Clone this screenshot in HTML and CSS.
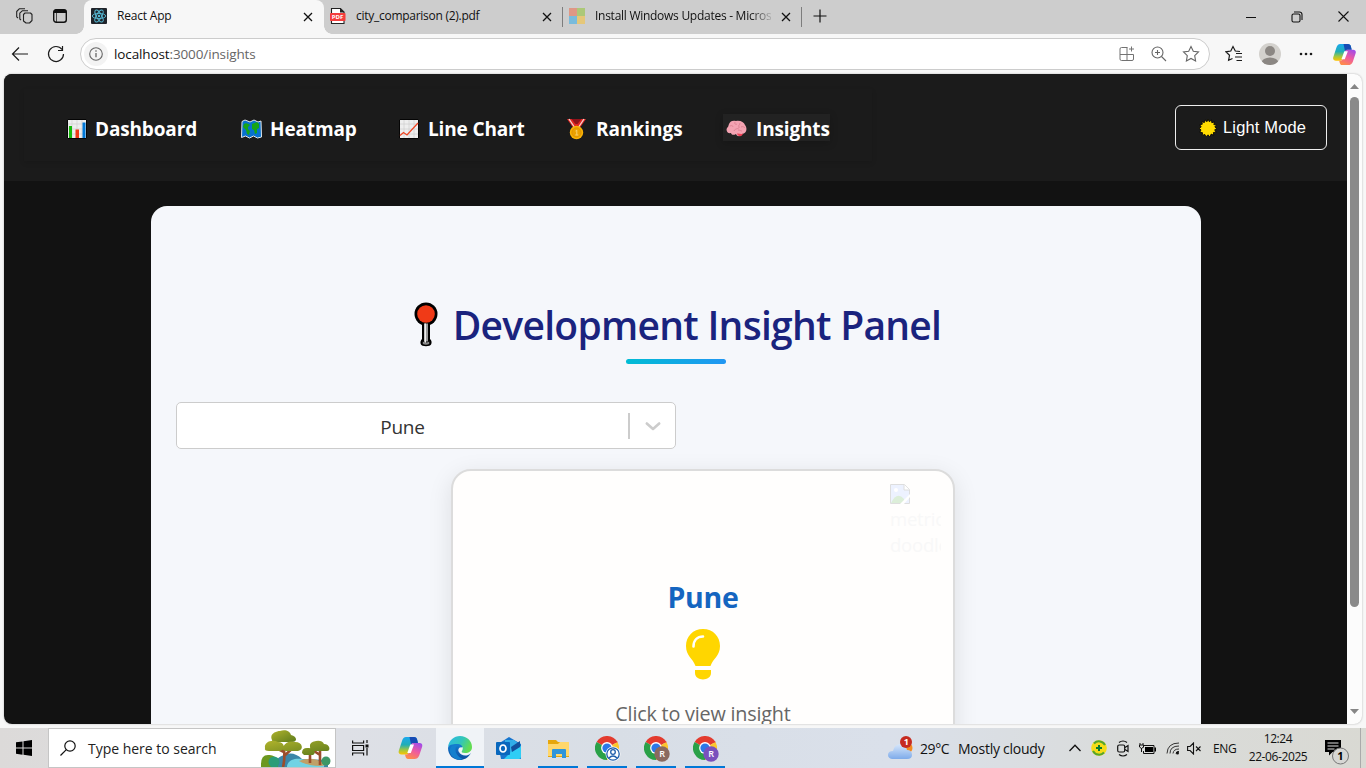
FILE: index.html
```html
<!DOCTYPE html>
<html lang="en">
<head>
<meta charset="utf-8">
<title>React App</title>
<link rel="stylesheet" href="styles.css">
</head>
<body>
<svg class="defs" width="0" height="0">
  <defs>
    <linearGradient id="cpA" x1="0" y1="0" x2="0" y2="1"><stop offset="0" stop-color="#1ba8ee"/><stop offset=".45" stop-color="#20aeb5"/><stop offset=".75" stop-color="#a4c73d"/><stop offset="1" stop-color="#ffc400"/></linearGradient>
    <linearGradient id="cpB" x1=".8" y1="0" x2=".3" y2="1"><stop offset="0" stop-color="#a14bea"/><stop offset=".5" stop-color="#ee5aa0"/><stop offset="1" stop-color="#ff8b4a"/></linearGradient>
    <linearGradient id="edgeA" x1="0" y1="0" x2="1" y2=".4"><stop offset="0" stop-color="#2bb8e8"/><stop offset=".6" stop-color="#33c6b8"/><stop offset="1" stop-color="#62dc52"/></linearGradient>
    <linearGradient id="edgeB" x1="0" y1="0" x2="0" y2="1"><stop offset="0" stop-color="#1683d8"/><stop offset="1" stop-color="#0c4b9c"/></linearGradient>
    <linearGradient id="cloudG" x1="0" y1="0" x2="0" y2="1"><stop offset="0" stop-color="#d7e7fb"/><stop offset="1" stop-color="#7eabea"/></linearGradient>
    <linearGradient id="treeG" x1="0" y1="0" x2="1" y2="1"><stop offset="0" stop-color="#b0b32c"/><stop offset="1" stop-color="#5d7b1c"/></linearGradient>
    <symbol id="close" viewBox="0 0 10 10"><path d="M1 1l8 8M9 1l-8 8" stroke="#111" stroke-width="1.3" fill="none"/></symbol>
    <symbol id="copilot" viewBox="0 0 24 24">
      <path d="M7.500 1h8c2 0 2.700 1 3.100 2.400L19.500 7H15c-1.500 0-2 .8-2.500 2.500l-2 6.500C9.800 18 9 18.500 7.500 18.500H3C1 18.500-.3 17 .2 15L3.500 5C4.300 2.300 5.500 1 7.500 1z" fill="url(#cpA)"/>
      <path d="M11 1h4.500c2 0 2.700 1 3.100 2.400L19.500 7H15c-1.300 0-2 .6-2.400 1.800z" fill="#174bb4"/>
      <path d="M16 23H9.500C8 23 7.500 22 7 20.500l-.5-2h1C9 18.500 9.900 18 10.500 16l2-6.500C13 7.800 13.500 7 15 7h6c2.300 0 3.200 1.500 2.700 3.500l-3 9c-.8 2.500-2.700 3.500-4.700 3.500z" fill="url(#cpB)"/>
      <path d="M11.800 8.500h3.700l-3.200 8.500H8.800z" fill="#fff"/>
    </symbol>
    <symbol id="chrome" viewBox="0 0 24 24">
      <path d="M12 12L1.600 6A12 12 0 0 1 22.400 6z" fill="#e33b2e"/>
      <path d="M12 12L22.400 6A12 12 0 0 1 12 24z" fill="#fcc62d"/>
      <path d="M12 12V24A12 12 0 0 1 1.600 6z" fill="#2aa148"/>
      <path d="M12 6h10.400" stroke="#e33b2e" stroke-width="1"/>
      <circle cx="12" cy="12" r="5.900" fill="#fff"/><circle cx="12" cy="12" r="4.600" fill="#2b78e8"/>
    </symbol>
  </defs>
</svg>

<header class="tabbar">
  <svg class="ws" width="18" height="18" viewBox="0 0 18 18" fill="none" stroke="#222" stroke-width="1.100" stroke-linejoin="round"><path d="M8.500 7.500L10 6h5.500l1.500 1.500v6L14.500 16H11l-2.500-2zM6 13l-1.200-1V6.200L7.500 3.700H13M3 11L1.700 9.800V4.500L4.500 1.700H10"/></svg>
  <svg class="vt" width="16" height="16" viewBox="0 0 16 16"><rect x="1.700" y="1.700" width="12.600" height="12.600" rx="2.500" fill="none" stroke="#111" stroke-width="1.400"/><path d="M1.500 5V3.500a2 2 0 0 1 2-2h9a2 2 0 0 1 2 2V5z" fill="#111"/><path d="M4.500 5v9" stroke="#111" stroke-width=".7"/></svg>
  <div class="tab active">
    <svg class="fav" width="16" height="16" viewBox="0 0 16 16"><rect width="16" height="16" rx="1" fill="#20242b"/><g fill="none" stroke="#58bcd7" stroke-width=".9"><ellipse cx="8" cy="8" rx="6.700" ry="2.600"/><ellipse cx="8" cy="8" rx="6.700" ry="2.600" transform="rotate(60 8 8)"/><ellipse cx="8" cy="8" rx="6.700" ry="2.600" transform="rotate(120 8 8)"/></g><circle cx="8" cy="8" r="1.200" fill="#58bcd7"/></svg>
    <span class="title t-react">React App</span><svg class="x" width="10" height="10"><use href="#close"/></svg>
  </div>
  <div class="tab">
    <svg class="fav pdf" width="16" height="18" viewBox="0 0 16 18"><path d="M1.500 1.500h9l3.500 3.500V16.500H1.500z" fill="#fff" stroke="#222" stroke-width="1.100"/><path d="M10 1v4.500h4.500z" fill="#222"/><rect x="0" y="6" width="15.500" height="8" rx=".8" fill="#f43d3d"/><text x="1.800" y="12.200" class="pdftext">PDF</text></svg>
    <span class="title t-city">city_comparison (2).pdf</span><svg class="x" width="10" height="10"><use href="#close"/></svg>
  </div>
  <div class="tab">
    <svg class="fav" width="16" height="16"><path fill="#df9785" d="M0 0h8v8H0z"/><path fill="#acc878" d="M8 0h8v8H8z"/><path fill="#79bbdc" d="M0 8h8v8H0z"/><path fill="#e5c779" d="M8 8h8v8H8z"/></svg>
    <span class="title fade">Install Windows Updates - Micros</span><svg class="x" width="10" height="10"><use href="#close"/></svg>
  </div>
  <svg class="plus" width="14" height="14"><path d="M7 0.500v13M0.500 7h13" stroke="#111" stroke-width="1.200"/></svg>
  <div class="winctl">
    <svg width="10" height="12"><path d="M0 6.500h10" stroke="#111"/></svg>
    <svg width="12" height="12" fill="none" stroke="#111" stroke-width="1.100"><rect x="1" y="3" width="8" height="8" rx="1.500"/><path d="M3 1h5.500a2.500 2.500 0 0 1 2.500 2.500V9"/></svg>
    <svg width="11" height="11"><path d="M.5.5l10 10M10.500.5l-10 10" stroke="#111" stroke-width="1.100"/></svg>
  </div>
</header>

<div class="toolbar">
  <svg class="back" width="18" height="16" fill="none" stroke="#1b1b1b" stroke-width="1.200"><path d="M17 8H1.500M8 1.500L1.500 8 8 14.500"/></svg>
  <svg class="reload" width="18" height="18" fill="none" stroke="#1b1b1b" stroke-width="1.200"><path d="M15 4.500A7.500 7.500 0 1 0 16.500 9M15.500 1v4.500H11"/></svg>
  <div class="address">
    <span class="info"><svg width="14" height="14"><circle cx="7" cy="7" r="6.300" fill="none" stroke="#666" stroke-width="1.100"/><path d="M7 6v4.300M7 3.300v1.500" stroke="#666" stroke-width="1.300"/></svg></span>
    <span class="url">localhost<span>:3000/insights</span></span>
    <svg class="a1" width="16" height="16" fill="none" stroke="#727272"><path d="M8.500 1.500H2.500a1.500 1.500 0 0 0-1.500 1.500V13a1.500 1.500 0 0 0 1.500 1.500H13a1.500 1.500 0 0 0 1.500-1.500V8.500H1M8 1.500v13M12.500 .5v5M10 3h5"/></svg>
    <svg class="a2" width="16" height="16" fill="none" stroke="#666" stroke-width="1.100"><circle cx="6.500" cy="6.500" r="5.500"/><path d="M10.500 10.500l4.500 4.500M6.500 4v5M4 6.500h5"/></svg>
    <svg class="a3" width="18" height="18" fill="none" stroke="#666" stroke-width="1.100"><path d="M9 1.500l2.300 4.800 5.200.7-3.800 3.700.9 5.300L9 13.500 4.400 16l.9-5.300L1.500 7l5.200-.7z"/></svg>
  </div>
  <svg class="fvs" width="18" height="18" fill="none" stroke="#1b1b1b" stroke-width="1.200"><path d="M15 6.500L10.300 6 8 1.500 5.800 6l-5 .8 3.700 3.500-.9 5L7.500 13.500M11 8.500h6M10 12h7M11.500 15.500H17"/></svg>
  <svg class="avatar" width="22" height="22"><defs><clipPath id="av"><circle cx="11" cy="11" r="11"/></clipPath></defs><circle cx="11" cy="11" r="11" fill="#d3d1cd"/><g fill="#8b8783" clip-path="url(#av)"><circle cx="11" cy="8" r="5"/><ellipse cx="11" cy="20" rx="8.500" ry="5.500"/></g></svg>
  <svg class="dots" width="14" height="4" fill="#1b1b1b"><circle cx="2" cy="2" r="1.300"/><circle cx="7" cy="2" r="1.300"/><circle cx="12" cy="2" r="1.300"/></svg>
  <svg class="cp" width="23" height="23"><use href="#copilot"/></svg>
</div>

<div class="window">
  <main class="page">
    <nav class="nav">
      <div class="links">
        <a class="link dash"><svg width="20" height="20"><path fill="#eee" stroke="#050505" d="M.5.5h19v19H.5z"/><path d="M1 5h18M1 10h18M1 15h18M5 1v18M10 1v18M15 1v18" stroke="#d0d0d0" stroke-width=".7"/><path fill="#16b90b" d="M2 7h3v12H2z"/><path fill="#f03a17" d="M8.500 10.500h3.500V19H8.500z"/><path fill="#0078d7" d="M15.500 3.500h3V19h-3z"/></svg><span>Dashboard</span></a>
        <a class="link heat"><svg width="21" height="20"><path d="M1 2.500L4 1l5 2 4-2 4 2 3-1 .5 16-4 1-4-2-4 2-4-2-4 1.500z" fill="#0872ce" stroke="#e2e5e8"/><path d="M3 5c2-2 5 0 6 1l-2 2v2l2 2-1 4-2-1-1-4-3-3zM11 5l5-2 2 2v4l-2 1v4l-2 1-1-4-2-1z" fill="#18a516"/></svg><span>Heatmap</span></a>
        <a class="link line"><svg width="20" height="20"><path fill="#eee" stroke="#050505" d="M.5.5h19v19H.5z"/><path d="M1 5h18M1 10h18M1 15h18M5 1v18M10 1v18M15 1v18" stroke="#d0d0d0" stroke-width=".8"/><path d="M1 16.500l3.500-3L8 16 19 4" fill="none" stroke="#ef4523" stroke-width="1.300"/></svg><span>Line Chart</span></a>
        <a class="link rank"><svg width="21" height="22"><path d="M1 1h19l-7 10H8z" fill="#e22623"/><path d="M5.500 1h10l-4 5h-2z" fill="#90131b"/><path d="M3 1l6 9M18 1l-6 9" stroke="#f4d5d2" stroke-width="1.300"/><circle cx="10.500" cy="14.500" r="6.700" fill="#f9b306"/><circle cx="10.500" cy="14.500" r="4.700" fill="#eaa000" stroke="#d58900" stroke-width=".7"/><path d="M9.500 13l1.300-.8v4.500M9.300 17h3" fill="none" stroke="#f8d472"/></svg><span>Rankings</span></a>
        <a class="link ins"><svg width="21" height="18"><path d="M3 4C4 1 7 0 10 1c4-1 8 1 9 4 3 4 1 9-3 9-1 3-5 3-6 0-3 2-5 0-5-1-4 1-6-4-3-6z" fill="#f4a3b2"/><path d="M11 13.500c1 3.500 5 3.500 6 .3-2 .5-4-.5-6-.3z" fill="#ed4054"/><path d="M4 6c2-1 3 0 3 1M9 2c-1 2 1 3 2 2M14 3c0 2-2 2-1 4s-4 1-5 4M15 7c2-1 3 0 4 1M12 10c2 0 3 1 4 1" fill="none" stroke="#df8495"/></svg><span>Insights</span></a>
      </div>
      <button class="mode"><svg width="18" height="18"><path d="M9 0l1.300 2.700L12.500 1l.3 2.700 2.800-.8-.8 2.600 2.700.5-1.700 2L18 9.500l-2.300 1.300 1.400 2.400-2.700.3.300 2.800-2.500-1.200L10.700 18 9 15.800 7 17.800l-1.200-2.400-2.500 1 .2-2.700-2.700-.4 1.200-2.400L0 9.300 2.200 8 .8 5.700l2.500-.5-.5-2.500 2.600.8L6.300 1 8 2.700z" fill="#ffdb00" stroke="#080808" stroke-width=".9"/></svg><span>Light Mode</span></button>
    </nav>
    <section class="panel">
      <div class="heading">
        <h1><svg width="24" height="46"><path d="M8 21h8v16c1.500 1 2 3 1.300 5-.8 3-9.800 3-10.600 0-.6-2 0-4 1.300-5z"/><circle cx="12" cy="12" r="11.500"/><circle cx="12" cy="12" r="8.800" fill="#f03a17"/><path d="M10 21.500h4v18h-4z" fill="#999"/><path d="M10.500 21.500H12V41h-1.500z" fill="#eee"/><path d="M8.800 39.500q3.200 1.800 6.400 0v2.500q-3.200 1.500-6.400 0z" fill="#888"/></svg><span>Development Insight Panel</span></h1>
        <div class="rule"></div>
      </div>
      <div class="select"><span class="value">Pune</span><i></i><svg width="20" height="20" viewBox="0 0 20 20"><path d="M3.800 7.500l6.200 5.500 6.200-5.500" fill="none" stroke="#ccc" stroke-width="2.600" stroke-linecap="round" stroke-linejoin="round"/></svg></div>
      <article class="card">
        <div class="doodle"><svg width="20" height="20"><path d="M.5.5h14l5 5v14H.5z" fill="#edf2ff" stroke="#dedede"/><path d="M14 .5V6h5.500" fill="#fff" stroke="#dedede"/><circle cx="6" cy="6" r="2" fill="#fff"/><path d="M1 19q6-12 13-4v4z" fill="#dceed9"/><path d="M10 20L20 10v3l-6 7z" fill="#fff"/></svg><span>metric<br>doodle</span></div>
        <h2>Pune</h2>
        <svg class="bulb" width="36" height="52" viewBox="0 0 36 52"><path d="M18 1C8 1 1 8.500 1 18c0 10 7 12.500 9.500 20h15C28 30.500 35 28 35 18 35 8.500 28 1 18 1zM10 42h16v3c0 8.500-16 8.500-16 0z" fill="#ffd600"/><path d="M8.500 18.500C8.500 12 12.500 8.500 18 8.500" fill="none" stroke="#fffefc" stroke-width="2.600" stroke-linecap="round"/></svg>
        <p>Click to view insight</p>
      </article>
    </section>
  </main>
  <div class="scroll">
    <svg width="9" height="5"><path d="M0 5L4.500 0 9 5z" fill="#868686"/></svg>
    <div class="thumb"></div>
    <svg class="down" width="9" height="5"><path d="M0 0l4.500 5L9 0z" fill="#868686"/></svg>
  </div>
</div>

<footer class="taskbar">
  <div class="start"><svg width="16" height="16"><path d="M0 2.300l6.500-.9v6.200H0zM7.500 1.200L16 0v7.600H7.500zM0 8.500h6.500v6.200L0 13.800zM7.500 8.500H16V16l-8.500-1.200z"/></svg></div>
  <div class="search">
    <svg class="glass" width="16" height="16" fill="none" stroke="#111" stroke-width="1.200"><circle cx="10" cy="6" r="5.200"/><path d="M6.300 9.700L.5 15.500"/></svg>
    <span>Type here to search</span>
    <svg class="scene" width="70" height="37" viewBox="0 0 70 37">
      <path d="M16 29q14-11 25 0l26 1v7H10z" fill="#3b86a8"/><path d="M26 37c0-6 7-9 14-8 9 1 10 5 23 4v4z" fill="#71d3e4"/><path d="M38 31q15-6 27 4l-5 1q-13 0-22-5z" fill="#c0a067"/>
      <path d="M22 37q2-8 1-17l-7-6M23 26l10-9M23 22l-8-4M59 35V20l4-5M59 25l-6-4M49 33V22" stroke="#9b4d2b" stroke-width="2.600" fill="none"/>
      <g fill="url(#treeG)"><path d="M11 10C8 4 15 1 19 1c5-2 10 0 11 4 6 1 7 7 1 7H14q-3 0-3-2z"/><path d="M4 18c-1-6 7-9 13-6 7 0 8 8 2 9H8q-5 0-4-3zM22 17q4-7 12-5c8 0 9 8 3 9H25q-5-1-3-4zM49 17q-1-5 6-6 6-1 8 3c6 0 7 7 3 7H54q-5 0-5-4zM41 23q0-5 5-5c7-1 10 5 6 7H43z"/></g>
      <path d="M0 34q0-9 7-9 7-1 9 6l1 6H0z" fill="#6c981f"/><circle cx="13" cy="32" r="5.500" fill="#2a9d78"/><circle cx="65" cy="31" r="4.500" fill="#3d9765"/>
    </svg>
  </div>
  <div class="tasks">
    <div class="tk"><svg width="17" height="16" fill="none" stroke="#111" stroke-width="1.200"><path d="M.6.500v2.500h11V.5M.6 15.500V13h11v2.500M.6 5.500h11v5H.6zM15 0v3M15 8v7.500"/><path d="M13.500 4.500h3v3h-3z" fill="#111" stroke="none"/></svg></div>
    <div class="tk copi"><svg width="25" height="24"><use href="#copilot"/></svg></div>
    <div class="tk edge"><svg width="24" height="24" viewBox="0 0 24 24"><path d="M0 12C1 7 5 6 9 6c5 0 8 3 8 6-5-3-8 1-6 4 2 4 8 5 12 1-3 5-7 7-11 7C5 24 0 19 0 12z" fill="url(#edgeB)"/><path d="M8 11c-2 5 2 10 7 12-4 2-9 0-12-4-3-6 0-10 5-10 3 0 5 1 6 3-3-2-5-2-6-1z" fill="#137fce"/><path d="M0 11C1 4 6 0 12 0c7 0 12 5 12 11 0 4-3 6-7 6-3 0-4-1-3-2 2-3 0-7-4-7C6 8 2 8 0 11z" fill="url(#edgeA)"/></svg></div>
    <div class="tk"><svg width="25" height="24"><path d="M2 8L13 1l12 7v15H5z" fill="#1675ce"/><path d="M9 4h9l5 4v7l-8 3-6-6z" fill="#31ade9"/><path d="M15 16l10-6v11q0 2-2 2H8z" fill="#2fcdf5"/><path d="M15 11l9-6v6l-8 5z" fill="#12509d"/><rect x="0" y="6" width="14" height="13" rx="1" fill="#0867bd"/><ellipse cx="7" cy="12.500" rx="3" ry="3.500" fill="none" stroke="#fff" stroke-width="1.700"/></svg></div>
    <div class="tk run"><svg width="22" height="20"><path d="M0 1h8l2 2h11v15H0z" fill="#e6a70c"/><path d="M0 5h10l2-2h9v14H0z" fill="#ffd76b"/><path d="M4 19v-8q0-1 1-1h12q1 0 1 1v8h-4v-4H8v4z" fill="#2f95da"/></svg></div>
    <div class="tk run"><svg width="26" height="26"><use href="#chrome" width="24" height="24"/><circle cx="18" cy="18" r="7.500" fill="#fff"/><circle cx="18" cy="18" r="6.200" fill="none" stroke="#1d5cab" stroke-width="1.300"/><circle cx="18" cy="16" r="2.300" fill="none" stroke="#1d5cab" stroke-width="1.300"/><path d="M14 22q4-4 8 0" fill="none" stroke="#1d5cab" stroke-width="1.500"/></svg></div>
    <div class="tk run"><svg width="26" height="26"><use href="#chrome" width="24" height="24"/><circle cx="18" cy="18" r="7.700" fill="#8a6a5f"/><text x="15.300" y="21.300" class="badge">R</text></svg></div>
    <div class="tk run"><svg width="26" height="26"><use href="#chrome" width="24" height="24"/><circle cx="18" cy="18" r="7.700" fill="#7950bd"/><text x="15.300" y="21.300" class="badge">R</text></svg></div>
  </div>
  <div class="weather"><svg width="26" height="25"><circle cx="19" cy="12" r="5.500" fill="#f38b20"/><path d="M4 23q-4-1-4-4 0-4 5-4Q6 9 12 8q6 0 7 6 5 0 5 5 0 4-5 4z" fill="url(#cloudG)"/><circle cx="18" cy="6" r="6" fill="#c62b20"/><text x="15.800" y="9.300" class="wn">1</text></svg><span class="temp">29°C</span><span class="cloudy">Mostly cloudy</span></div>
  <div class="tray">
    <svg class="up" width="12" height="8"><path d="M.5 7L6 1.200 11.500 7" fill="none" stroke="#111" stroke-width="1.300"/></svg>
    <svg class="sec" width="16" height="16"><circle cx="8" cy="8" r="7.800" fill="#f5dc17"/><path d="M3 3.500A6.800 6.800 0 0 1 14 5M13 12.500A6.800 6.800 0 0 1 2 11" fill="none" stroke="#55a52d" stroke-width="2"/><path d="M8 5v6M5 8h6" stroke="#087b2d" stroke-width="2"/></svg>
    <svg class="cam" width="12" height="17" fill="none" stroke="#111" stroke-width="1.200"><rect x=".7" y="5" width="7" height="7" rx="1.500"/><path d="M8 7.500l3-2v6l-3-2M2 2.500q4-3 8 0M2 14.500q4 3 8 0"/></svg>
    <svg class="bat" width="17" height="13"><path d="M4.500 5.500V3.500H15v8H4.500V9" fill="none" stroke="#111"/><path d="M6 5h8v5H6zM15.500 5.500H17v4h-1.500z"/><path d="M1 1v2M4 1v2M.5 3h4v2l-2 1.500L.5 5zM2.500 6v4" fill="none" stroke="#111"/></svg>
    <svg class="wifi" width="14" height="14" fill="none" stroke="#333"><path d="M1 12.500Q1.500 2 13 2M4 12.500Q4 5 13 5M7 12.500Q7.500 8 13 8"/><path d="M10 12.500Q10 10.500 13 10.500" stroke="#111"/><circle cx="11.500" cy="12" r="1.500" fill="#111" stroke="none"/></svg>
    <svg class="vol" width="15" height="13" fill="none" stroke="#111" stroke-width="1.100"><path d="M.6 4.500h2.500L6.500 1v11L3.100 8.500H.6zM9 4.500l4.500 4.500M13.500 4.500L9 9"/></svg>
    <span class="eng">ENG</span>
    <div class="clock"><span>12:24</span><span class="date">22-06-2025</span></div>
    <svg class="note" width="25" height="26"><path d="M0 0h16v12H7.500L4 15.500V12H0z"/><path d="M2.500 3h11M2.500 6h11M2.500 9h7" stroke="#ddd" stroke-width="1.200"/><circle cx="15.500" cy="16" r="8" fill="#d7d7d4" stroke="#777"/><text x="12.300" y="20" class="nn">1</text></svg>
    <div class="peek"></div>
  </div>
</footer>
</body>
</html>
```
FILE: styles.css
```css
* { box-sizing: border-box; }
body { margin: 0; width: 1366px; height: 768px; overflow: hidden; background: #f7f7f7; font-family: "Open Sans", "Noto Sans", sans-serif; color: #111; display: flex; flex-direction: column; }
svg { display: block; flex: none; }
span { white-space: nowrap; }
.defs { position: absolute; }

.tabbar { height: 34px; flex: none; background: #cdcdcd; display: flex; align-items: center; padding-bottom: 2px; }
.ws { margin-left: 15px; }
.vt { margin-left: 19px; margin-right: 16px; }
.tab { width: 239px; height: 32px; display: flex; align-items: center; padding-left: 6px; position: relative; }
.tab:not(.active)::after { content: ""; position: absolute; right: 0; top: 7px; width: 1px; height: 20px; background: #7d7d7d; }
.tab.active { width: 240px; height: 34px; margin-bottom: -2px; padding: 0 0 2px 7px; background: #f7f7f7; border-radius: 8px 8px 0 0; }
.tab.active::before, .tab.active::after { content: ""; position: absolute; bottom: 0; width: 8px; height: 8px; }
.tab.active::before { left: -8px; background: radial-gradient(circle at 0 0, #cdcdcd 7.500px, #f7f7f7 8px); }
.tab.active::after { right: -8px; background: radial-gradient(circle at 100% 0, #cdcdcd 7.500px, #f7f7f7 8px); }
.title { margin-left: 10px; width: 176px; font-size: 12px; letter-spacing: -.27px; line-height: 18px; }
.t-react { letter-spacing: -.2px; }
.x { margin-left: 10px; margin-top: 1px; }
.fade { -webkit-mask-image: linear-gradient(90deg, #000 155px, transparent 180px); }
.pdftext { font: bold 6px "Open Sans", sans-serif; fill: #fff; }
.plus { margin-left: 11px; }
.winctl { margin-left: auto; display: flex; align-items: center; gap: 35px; padding-right: 17px; padding-top: 1px; }

.toolbar { height: 40px; flex: none; display: flex; align-items: center; background: #f7f7f7; }
.back { margin-left: 11px; }
.reload { margin: 0 15px 0 18px; }
.address { width: 1130px; height: 32px; border: 1px solid #ccc; border-radius: 16px; background: #fff; display: flex; align-items: center; padding-left: 3px; }
.info { width: 24px; height: 24px; border-radius: 12px; background: #f3f3f3; display: grid; place-items: center; }
.url { margin-left: 6px; font-size: 13.500px; letter-spacing: -.12px; flex: 1; }
.url span { color: #666; }
.a1 { margin-right: 16px; } .a2 { margin-right: 15px; } .a3 { margin-right: 9px; }
.fvs { margin-left: 15px; } .avatar { margin-left: 16px; } .dots { margin-left: 18px; } .cp { margin-left: 20px; }

.window { margin: 0 4px; height: 650px; flex: none; width: 1358px; display: flex; border-radius: 8px; overflow: hidden; background: #fcfcfc; box-shadow: 0 0 2px #aaa; }
.page { width: 1343px; background: #121212; overflow: hidden; }
.nav { height: 107px; background: #1b1b1b; display: flex; align-items: flex-start; justify-content: space-between; padding: 31px 20px 0 20px; }
.links { width: 848px; height: 72px; margin-top: -16px; display: flex; align-items: center; padding-top: 5px; padding-left: 39px; box-shadow: 0 2px 5px rgba(0,0,0,.12); }
.link { height: 27px; display: flex; align-items: center; color: #fff; font-weight: 700; font-size: 19px; padding-left: 4px; }
.link svg { margin-top: 3px; }
.link span { margin-left: 8px; padding-top: 3px; line-height: 27px; letter-spacing: -.15px; }
.link.dash { width: 174px; } .link.heat { width: 158px; } .link.line { width: 168px; } .link.rank { width: 160px; }
.link.line span { margin-left: 9px; } .link.rank svg { margin-left: -1px; } .link.rank span { margin-left: 9px; letter-spacing: 0; }
.link.ins svg { margin-left: -1px; } .link.ins span { margin-left: 9px; }
.link.ins { width: 107px; background: #222; box-shadow: 0 2px 8px rgba(0,0,0,.2); }
.mode { width: 152px; height: 45px; border: 1px solid #eee; border-radius: 6px; background: transparent; color: #fff; font: 16.500px "Liberation Sans", sans-serif; display: flex; align-items: center; padding: 0 0 0 23px; }
.mode span { margin-left: 6px; letter-spacing: .15px; }

.panel { width: 1050px; height: 620px; margin: 25px 0 0 147px; background: #f5f7fb; border-radius: 16px; padding: 94px 25px 0; }
.heading { height: 102px; display: flex; flex-direction: column; align-items: center; }
h1 { margin: 0; height: 50px; display: flex; align-items: center; color: #1a237e; font-size: 39px; font-weight: 600; gap: 15px; padding-left: 3px; }
h1 span { line-height: 50px; letter-spacing: -.72px; }
.rule { margin-top: 9px; width: 100px; height: 5px; border-radius: 3px; background: linear-gradient(90deg, #00bcd4, #2196f3); }
.select { width: 500px; height: 47px; border: 1px solid #ccc; border-radius: 5px; background: #fff; display: flex; align-items: center; color: #333; font-size: 19px; }
.value { width: 451px; text-align: center; padding-top: 2px; letter-spacing: -.2px; }
.select i { width: 2px; height: 26px; background: #ccc; margin-right: 13px; }
.card { position: relative; width: 504px; height: 400px; margin: 20px 0 0 275px; border: 2px solid #dcdcdc; border-radius: 20px; background: #fffefd; box-shadow: 0 6px 24px rgba(0,0,0,.1); padding-top: 107px; display: flex; flex-direction: column; align-items: center; }
.doodle { position: absolute; right: 12px; top: 12px; width: 51px; height: 80px; overflow: hidden; color: #f8f8f8; font-size: 18.500px; line-height: 26px; letter-spacing: -.2px; }
.doodle svg { margin-top: 1px; }
.doodle span { display: block; margin-top: 2px; }
h2 { margin: 0; font-size: 28.500px; line-height: 38px; color: #1565c0; letter-spacing: -.3px; }
.bulb { margin-top: 12px; }
.card p { margin: 20px 0 0; font-size: 19.800px; line-height: 28px; color: #666; letter-spacing: -.2px; }
.scroll { width: 15px; display: flex; flex-direction: column; align-items: center; padding: 10px 0; }
.thumb { width: 9px; height: 510px; border-radius: 5px; background: #8a8a8a; margin-top: 8px; }
.down { margin-top: auto; }

.taskbar { height: 40px; margin-top: 4px; display: flex; background: linear-gradient(90deg, #dcdad9 0, #dee0e6 25%, #d8dee6 45%, #dae0ea 65%, #dadcdb 82%, #d9d9d3); flex: none; }
.start { width: 48px; display: grid; place-items: center; }
.search { width: 288px; border: 1px solid #c5c5c5; background: #fff; display: flex; align-items: center; }
.glass { margin-left: 11px; }
.search span { width: 145px; margin-left: 12px; margin-right: 28px; font-size: 14px; color: #222; letter-spacing: -.02px; }
.tasks { display: flex; }
.tk { width: 49px; height: 40px; display: flex; align-items: center; justify-content: center; position: relative; }
.tk.copi { width: 51px; }
.tk.edge { width: 48px; background: #f0f3f7; border-bottom: 2px solid #0078d7; padding-top: 2px; }
.tk.run { padding-left: 2px; padding-top: 2px; }
.tk.run::after { content: ""; position: absolute; left: 5px; bottom: 0; width: 40px; height: 2px; background: #0078d7; }
.badge { font: 600 9px "Open Sans", sans-serif; fill: #fff; }
.weather { display: flex; align-items: center; margin-left: 159px; width: 181px; font-size: 14px; }
.wn { font: bold 9px "Open Sans", sans-serif; fill: #fff; }
.temp { margin-left: 6px; width: 38px; letter-spacing: -.4px; }
.cloudy { letter-spacing: -.25px; }
.tray { display: flex; align-items: center; }
.sec { margin-left: 10px; } .cam { margin-left: 10px; } .bat { margin-left: 10px; } .wifi { margin-left: 10px; } .vol { margin-left: 7px; }
.eng { margin-left: 11px; font-size: 12px; width: 24px; letter-spacing: -.4px; }
.clock { margin-left: 10px; width: 62px; display: flex; flex-direction: column; align-items: center; font-size: 12px; line-height: 18px; letter-spacing: -.4px; }
.note { margin: 9px 0 0 16px; }
.nn { font: bold 11px "Open Sans", sans-serif; }
.peek { width: 1px; height: 40px; background: #aaa; margin-left: 10px; }
```
